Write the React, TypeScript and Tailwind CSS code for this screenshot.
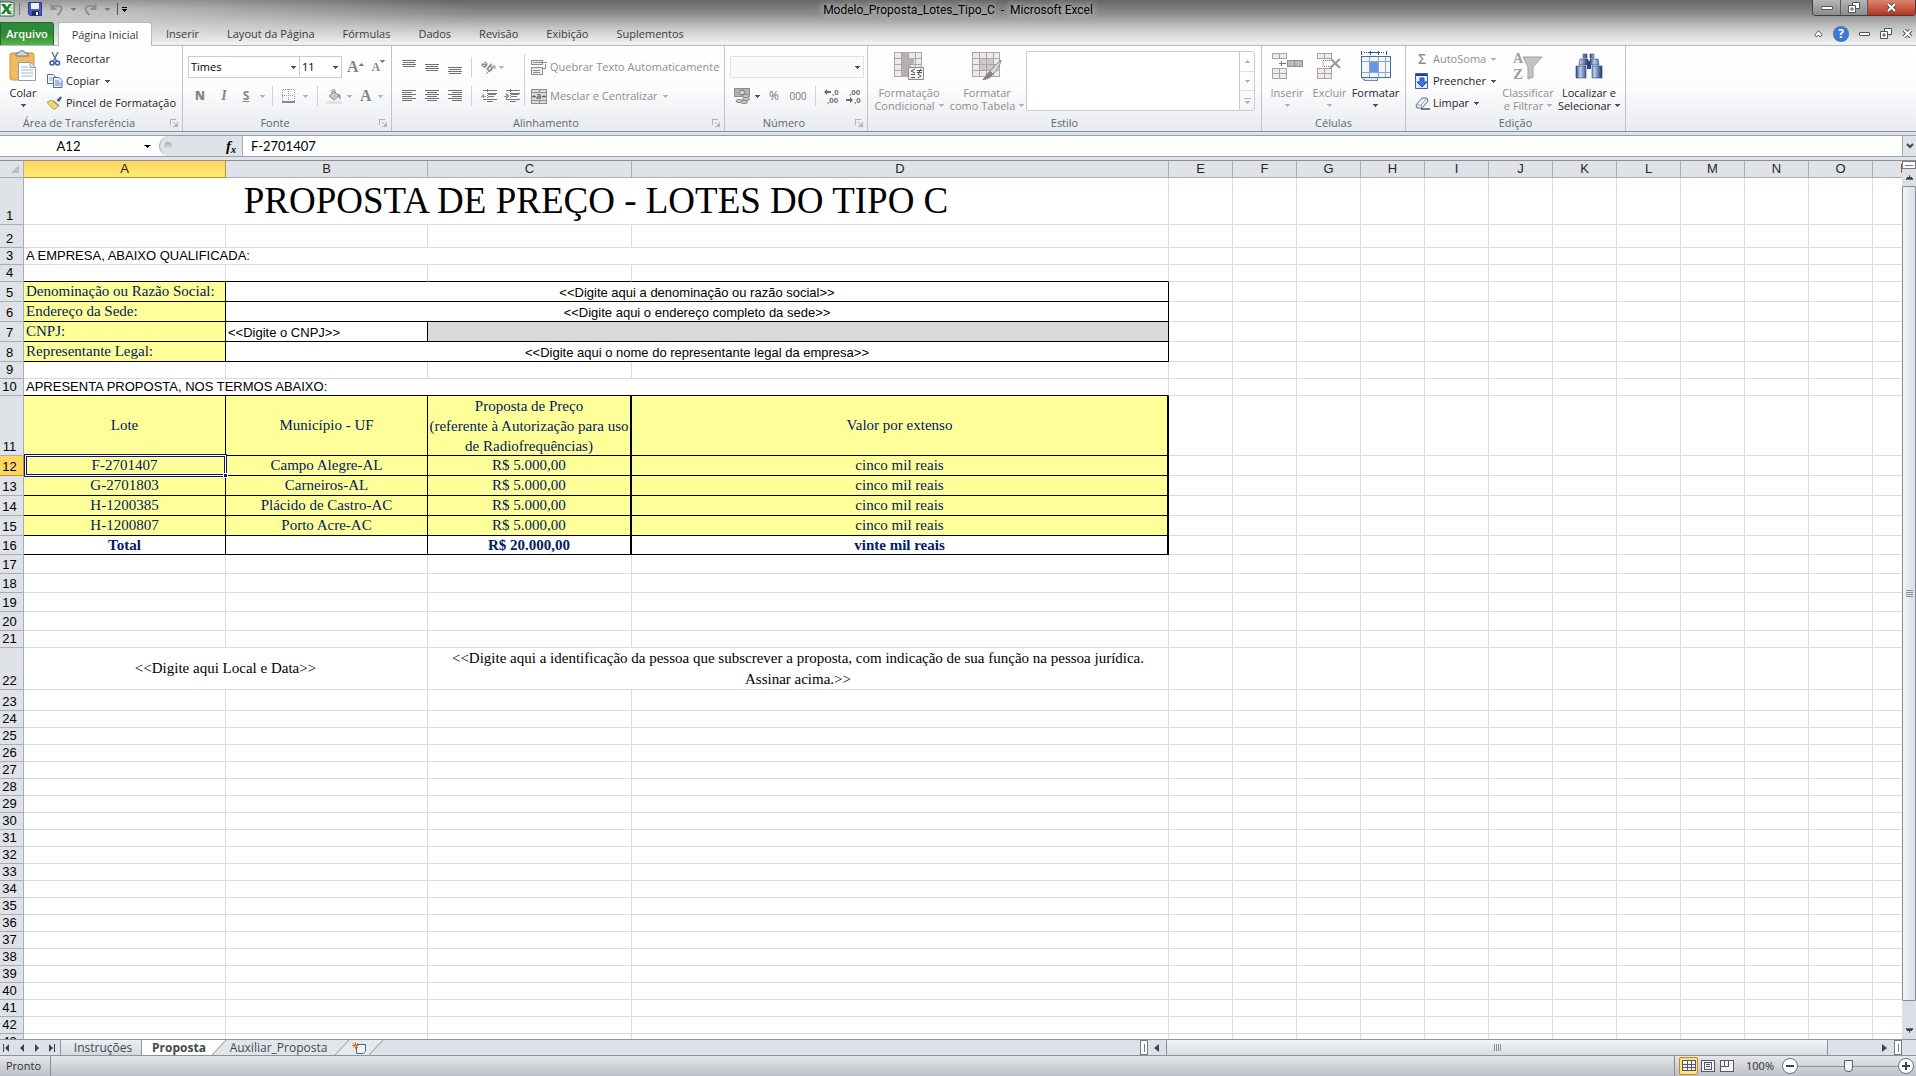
import type { ReactNode } from 'react';
import clsx from 'clsx';

const LINE = 'border-r border-b border-r-[#dadcdd] border-b-[#dadcdd]';
const BOX = 'border-r border-b border-r-black border-b-black';
const SERIF = 'font-["Liberation_Serif",serif] text-[15px] leading-[19px]';
const SERIF_BOLD = 'font-["Liberation_Serif",serif] text-[15px] leading-[18px] font-bold';
const NAVY = 'text-[#002060]';
const YELLOW = 'bg-[#ffff99]';

const EXTRA_COLUMNS = ['E', 'F', 'G', 'H', 'I', 'J', 'K', 'L', 'M', 'N', 'O', 'P'];
const RIBBON_TABS = ['Inserir', 'Layout da Página', 'Fórmulas', 'Dados', 'Revisão', 'Exibição', 'Suplementos'];

const COMPANY = [
  { n: 5, label: 'Denominação ou Razão Social:', value: '<<Digite aqui a denominação ou razão social>>' },
  { n: 6, label: 'Endereço da Sede:', value: '<<Digite aqui o endereço completo da sede>>' },
  { n: 7, label: 'CNPJ:', value: '<<Digite o CNPJ>>' },
  { n: 8, label: 'Representante Legal:', value: '<<Digite aqui o nome do representante legal da empresa>>' },
];

const LOTS = [
  { n: 12, lot: 'F-2701407', city: 'Campo Alegre-AL' },
  { n: 13, lot: 'G-2701803', city: 'Carneiros-AL' },
  { n: 14, lot: 'H-1200385', city: 'Plácido de Castro-AC' },
  { n: 15, lot: 'H-1200807', city: 'Porto Acre-AC' },
];

/* ---------- small pieces ---------- */

function Arrow({ className = 'text-[#505050]' }: { className?: string }) {
  return (
    <svg width="5" height="3" viewBox="0 0 5 3" className={clsx('shrink-0', className)} shapeRendering="crispEdges">
      <path d="M0 0h5v1h-1v1h-1v1h-1v-1h-1v-1h-1z" fill="currentColor" />
    </svg>
  );
}

function Sep() {
  return <span className="h-5 w-px shrink-0 bg-[#cdd1d8]" />;
}

function Launcher({ label }: { label: string }) {
  return (
    <button aria-label={label} className="flex w-5 justify-end">
      <svg width="8" height="8" viewBox="0 0 8 8" fill="none" stroke="#b0b4ba" shapeRendering="crispEdges">
        <path d="M.5 6V.5H6M3 3l3 3M7.5 3v4.5H3" />
        <path d="M5 5h2v2H5z" fill="#b0b4ba" stroke="none" />
      </svg>
    </button>
  );
}

function Group({ title, width, launcher = false, children }: { title: string; width: string; launcher?: boolean; children: ReactNode }) {
  return (
    <section aria-label={title} className={clsx('flex shrink-0 flex-col border-r border-[#bfc3c9]', width)}>
      <div className="flex h-[69px]">{children}</div>
      <div className={clsx('flex h-4 items-center', launcher && 'pr-1')}>
        <span className="flex-1 text-center text-[#5f6572]">{title}</span>
        {launcher && <Launcher label={`Opções de ${title}`} />}
      </div>
    </section>
  );
}

function SmallButton({ icon, label, arrow = false, disabled = false }: { icon: ReactNode; label: string; arrow?: boolean; disabled?: boolean }) {
  return (
    <button className={clsx('flex h-[22px] items-center gap-[3px] whitespace-nowrap', disabled ? 'text-[#8e8e8e]' : 'text-[#262626]')}>
      <span className="flex w-4 justify-center">{icon}</span>
      <span>{label}</span>
      {arrow && <Arrow className={clsx('ml-[2px]', disabled ? 'text-[#b4b4b4]' : 'text-[#505050]')} />}
    </button>
  );
}

function BigButton({ icon, lines, width, disabled = false }: { icon: ReactNode; lines: string[]; width: string; disabled?: boolean }) {
  const arrow = <Arrow className={disabled ? 'text-[#b4b4b4]' : 'text-[#505050]'} />;
  return (
    <button className={clsx('flex shrink-0 flex-col items-center pt-1 leading-[13px] whitespace-nowrap', width, disabled ? 'text-[#8e8e8e]' : 'text-[#262626]')}>
      <span className="mb-1 flex h-8 items-center">{icon}</span>
      <span>{lines[0]}</span>
      <span className="flex h-[13px] items-center gap-1">{lines[1]}{arrow}</span>
    </button>
  );
}

/* ---------- icons ---------- */

const ExcelLogo = () => (
  <svg width="15" height="16" viewBox="0 0 15 16">
    <path d="M0 1h9l5 1v13H0z" fill="#fff" stroke="#1e7a34" />
    <path d="M10 3h3v2h-3zM10 6h3v2h-3zM10 9h3v2h-3zM10 12h3v2h-3z" fill="#b6dcae" />
    <path d="M1 3h4l2 3 2-3h3L8.500 8 12 13H8L6 10l-2 3H1l3.500-5z" fill="#1f8238" />
  </svg>
);

const SaveIcon = () => (
  <svg width="14" height="14" viewBox="0 0 14 14">
    <path d="M.5.5h13v13H2L.5 12z" fill="#4a56b8" stroke="#2f3a93" />
    <path d="M3 1h8v6H3z" fill="#eef2fb" />
    <path d="M4 9h7v4H4z" fill="#1f2766" />
    <path d="M8 10h2v3H8z" fill="#fff" />
  </svg>
);

const UndoIcon = ({ flip = false }: { flip?: boolean }) => (
  <svg width="13" height="13" viewBox="0 0 13 13" className={clsx(flip && '-scale-x-100')}>
    <path d="M1.500 1v5h5M2 5.500C4 2 11 1.500 11.500 6c0 3-2 4-4 6" fill="none" stroke="#8f8f8f" strokeWidth="2" />
  </svg>
);

const PasteIcon = () => (
  <svg width="28" height="32" viewBox="0 0 28 32">
    <rect x="1" y="3" width="24" height="27" rx="2" fill="#eebb62" stroke="#cf9639" />
    <path d="M7 6V3h3c0-3 6-3 6 0h3v3z" fill="#d5d8dc" stroke="#6f757d" />
    <path d="M9.500 12.500H21l5.500 5v13h-17z" fill="#fff" stroke="#8b9cb5" />
    <path d="M21 12.500v5h5.500" fill="#dfe8f4" stroke="#8b9cb5" />
    <path d="M12 17h7M12 20h12M12 23h12M12 26h12" stroke="#9fb2cf" />
  </svg>
);

const CutIcon = () => (
  <svg width="12" height="15" viewBox="0 0 12 15" fill="none">
    <path d="M3 0l4.500 9M9 0L4.500 9" stroke="#6b7788" strokeWidth="1.500" />
    <circle cx="3" cy="11" r="2" stroke="#2f5fb0" strokeWidth="1.600" />
    <circle cx="8.500" cy="11" r="2" stroke="#2f5fb0" strokeWidth="1.600" />
  </svg>
);

const CopyIcon = () => (
  <svg width="16" height="14" viewBox="0 0 16 14" stroke="#4b6da5">
    <path d="M.5.5H6l2.500 2.500v6.500h-8z" fill="#f7faff" />
    <path d="M2 4h4M2 6h4" stroke="#86a5d8" />
    <path d="M6.500 3.500H12l3 3v7H6.500z" fill="#eaf1fc" />
    <path d="M8 7h4M8 9h6M8 11h6" stroke="#5b86cf" />
  </svg>
);

const BrushIcon = () => (
  <svg width="17" height="14" viewBox="0 0 17 14">
    <path d="M10 4l4-4 2 1-3 5z" fill="#4f5a80" />
    <path d="M7 4l6 5-1 2-7-6z" fill="#8d97ad" />
    <path d="M5 4l7 6-4 4C5 12 2 9 0 6z" fill="#f1d97a" stroke="#b79336" />
  </svg>
);

function AlignIcon({ rows, className }: { rows: string; className?: string }) {
  return (
    <svg width="14" height="12" viewBox="0 0 14 12" className={className} stroke="#707070" shapeRendering="crispEdges">
      <path d={rows} />
    </svg>
  );
}

const IndentIcon = ({ right = false }: { right?: boolean }) => (
  <svg width="16" height="14" viewBox="0 0 16 14" stroke="#7a7a7a" shapeRendering="crispEdges">
    <path d="M2 1.500h14M7 4.500h9M7 7.500h6M2 10.500h14M6 12.500h6" />
    <path d="M7 5h8v1H7z" fill="#7a7a7a" stroke="none" />
    <path d={right ? 'M5 7L2 4v6z' : 'M0 7l3-3v6z'} fill="#9a9a9a" stroke="none" />
    <path d="M0 7.500h5" stroke="#9a9a9a" />
    <path d="M6.500 0v14" strokeDasharray="1 1" />
  </svg>
);

const OrientIcon = () => (
  <svg width="16" height="15" viewBox="0 0 16 15" className="overflow-visible">
    <text x="0" y="8" fontSize="10" fontWeight="bold" fill="#858585" transform="rotate(38 4 6)">ab</text>
    <path d="M5 14L14 6M14 6h-3M14 6v3" stroke="#8d8d8d" fill="none" />
  </svg>
);

const WrapIcon = () => (
  <svg width="16" height="15" viewBox="0 0 16 15" fill="none" stroke="#8d8d8d" shapeRendering="crispEdges">
    <path d="M.5.500h11v4H.5zM.5 7.500h11v7H.5z" fill="#eeeaee" />
    <path d="M2 2.500h14M2 10.500h7M2 12.500h7M14.500 4v5M12 8.500h3" />
  </svg>
);

const MergeIcon = () => (
  <svg width="16" height="15" viewBox="0 0 16 15" stroke="#8d8d8d">
    <path d="M.5.500h15v14H.5zM.5 3.500h15M.5 11.500h15M8 .5v3M8 11.500v3" fill="#ddd9dd" shapeRendering="crispEdges" />
    <path d="M1 7.500h4M11 7.500h4M3 6v3M13 6v3" stroke="#666" />
    <text x="5" y="10" fontSize="9" fontWeight="bold" fill="#666" stroke="none">a</text>
  </svg>
);

const BorderIcon = () => (
  <svg width="13" height="14" viewBox="0 0 13 14" fill="none" stroke="#9a9a9a" shapeRendering="crispEdges">
    <path d="M.5.500h12v12M.5.500v12M6.500 0v12M0 6.500h12" strokeDasharray="1 1" />
    <path d="M0 12.500h13" strokeWidth="2" stroke="#8a8a8a" />
  </svg>
);

const BucketIcon = () => (
  <svg width="16" height="15" viewBox="0 0 16 15">
    <path d="M0 12h16v3H0z" fill="#e6dfe3" />
    <path d="M3 7l5-5 5 5-5 4z" fill="#c8c8c8" stroke="#8d8d8d" />
    <path d="M6 5V1c0-1 3-1 3 0v4" fill="none" stroke="#8d8d8d" />
    <path d="M12 5c3 0 3 2 2 6-1-1-1-4-2-6z" fill="#8d8d8d" />
  </svg>
);

const MoneyIcon = () => (
  <svg width="17" height="16" viewBox="0 0 17 16">
    <rect x=".5" y=".5" width="15" height="8" fill="#b4b0b2" stroke="#8a8a8a" />
    <circle cx="8" cy="4.500" r="2.500" fill="#d8d5d7" stroke="#777" />
    <g fill="#cfcccd" stroke="#858585">
      <ellipse cx="12" cy="8" rx="3.500" ry="1.500" />
      <ellipse cx="12" cy="11" rx="3.500" ry="1.500" />
      <ellipse cx="10" cy="14" rx="3.500" ry="1.500" />
      <ellipse cx="5" cy="13" rx="3" ry="1.500" />
    </g>
  </svg>
);

const DecimalIcon = ({ top, bottom }: { top: string; bottom: string }) => (
  <svg width="17" height="16" viewBox="0 0 17 16" fill="#6a6a6a" fontSize="8" fontWeight="600" fontFamily="Liberation Sans, sans-serif" className="overflow-visible">
    <text x={top === ',0' ? 8 : 3} y="7">{top}</text>
    <text x={bottom === ',0' ? 8 : 3} y="15">{bottom}</text>
    {top === ',0' ? <path d="M0 4l3-3v2h4v2H3v2z" /> : <path d="M7 12l-3-3v2H0v2h4v2z" />}
  </svg>
);

const GridBase = () => (
  <path d="M.5.500h27v24H.5zM.5 6.500h27M.5 12.500h27M.5 18.500h27M7.500.500v24M14.500.500v24M21.500.500v24" fill="#efe9ef" stroke="#aaa6aa" shapeRendering="crispEdges" />
);

const CondIcon = () => (
  <svg width="30" height="28" viewBox="0 0 30 28">
    <GridBase />
    <path d="M8 0h6v25H8zM14 7h6v5h-6zM14 13h3v5h-3z" fill="#b3b0b3" />
    <path d="M14.500 15.500h15v12h-15z" fill="#f4f2f4" stroke="#8a8a8a" />
    <path d="M21 17l-4 2 4 2M17 22.500h4M17 25.500h4M23 18.500h5M23 20.500h5M27 17l-3 5M24 22l3 2-3 2" fill="none" stroke="#555" />
  </svg>
);

const TableFmtIcon = () => (
  <svg width="30" height="29" viewBox="0 0 30 29">
    <GridBase />
    <path d="M8 7h6v5H8zM15 7h6v5h-6zM8 13h6v5H8zM15 13h6v5h-6z" fill="#cbc8cb" />
    <path d="M29 8c-1 6-4 10-8 14l-3-3c4-4 7-8 11-11z" fill="#d9d9d9" stroke="#858585" />
    <path d="M18 19l3 3c-2 4-6 6-11 6 3-2 4-7 8-9z" fill="#858585" />
  </svg>
);

const InsertIcon = () => (
  <svg width="31" height="27" viewBox="0 0 31 27" stroke="#a8a4a8" fill="#f0eaf0" shapeRendering="crispEdges">
    <path d="M.5.500h14v5H.5zM7.500.500v5M.5 15.500h14v10H.5zM7.500 15.500v10M.5 20.500h14" />
    <path d="M15.500 7.500h15v6h-15zM22.500 7.500v6" fill="#bdb9bd" stroke="#8f8f8f" />
    <path d="M7 10.500h7M9 8v5" stroke="#777" />
  </svg>
);

const DeleteIcon = () => (
  <svg width="25" height="27" viewBox="0 0 25 27" stroke="#a8a4a8" fill="#f0eaf0">
    <path d="M.5.500h14v5H.5zM7.500.500v5M.5 15.500h14v10H.5zM7.500 15.500v10M.5 20.500h14" shapeRendering="crispEdges" />
    <path d="M15 7.500H6v6h9" fill="none" strokeDasharray="1 1" stroke="#777" />
    <path d="M14 6l9 9M23 6l-10 9" stroke="#999" strokeWidth="2" />
  </svg>
);

const FormatIcon = () => (
  <svg width="30" height="31" viewBox="0 0 30 31" shapeRendering="crispEdges">
    <path d="M.5 0v4M25.500 0v4" stroke="#34508c" />
    <path d="M3 1.500h5M18 1.500h6" stroke="#34508c" strokeDasharray="1 1" />
    <path d="M8 1.500h10M9.500 0v4M17.500 0v4" stroke="#34508c" />
    <path d="M.5 5.500h29v21H.5z" fill="#f3f7fd" stroke="#4d6a9c" />
    <path d="M1 10.500h28M1 21.500h28M8.500 6v20M17.500 6v20M24.500 6v20" stroke="#8ea6cf" />
    <path d="M9 11h8v10H9z" fill="#6b93e6" />
    <path d="M1 27l3 2.500h12l1-3" fill="#dfe8f6" stroke="#6f89b8" />
  </svg>
);

const FillIcon = () => (
  <svg width="14" height="16" viewBox="0 0 14 16">
    <path d="M.5.500h12v15H.5z" fill="#e2ebfa" stroke="#3b5f9f" />
    <path d="M1 1h11v2H1z" fill="#1f448c" />
    <path d="M5 5h4v4h3l-5 5-5-5h3z" fill="#3c78e0" stroke="#1d4fae" />
  </svg>
);

const EraserIcon = () => (
  <svg width="15" height="13" viewBox="0 0 15 13">
    <path d="M1 8l6-7h5l1 3-6 7H2z" fill="#f0f4fb" stroke="#5c6c8c" />
    <path d="M1 8h5l6-7M6 8l1 3" fill="none" stroke="#8d9cba" />
    <path d="M6 12h9" stroke="#000" />
  </svg>
);

const SortIcon = () => (
  <svg width="30" height="30" viewBox="0 0 30 30" fill="#9c9c9c" fontWeight="bold" fontFamily="Liberation Serif, serif" className="overflow-visible">
    <path d="M10 6h19l-9 10v10l-5 2V16z" fill="#c4c4c4" stroke="#a0a0a0" />
    <text x="0" y="12" fontSize="14">A</text>
    <text x="0" y="28" fontSize="15">Z</text>
  </svg>
);

const BinocularsIcon = () => (
  <svg width="28" height="26" viewBox="0 0 28 26">
    <defs>
      <linearGradient id="barrel">
        <stop offset="0" stopColor="#2d4778" />
        <stop offset=".35" stopColor="#b9d0f4" />
        <stop offset="1" stopColor="#1f3766" />
      </linearGradient>
    </defs>
    <path d="M12 8h4v8h-4z" fill="#2d4778" />
    <g fill="url(#barrel)" stroke="#2c4675" strokeWidth=".6">
      <path d="M8 1h4v4H8zM5 6h8v6H4zM1 13h10v12H1z" />
      <path d="M15 1h4v4h-4zM15 6h8l1 6h-9zM17 13h10v12H17z" />
    </g>
  </svg>
);

const RestoreIcon = ({ className }: { className?: string }) => (
  <svg width="12" height="11" viewBox="0 0 12 11" fill="#fff" stroke="#4f545c" className={className}>
    <path d="M4.500.500h7v6h-7z" />
    <path d="M.5 3.500h7v7h-7zM3 6h2v2H3z" />
  </svg>
);

const CrossIcon = () => (
  <svg width="11" height="9" viewBox="0 0 11 9">
    <path d="M2 1l7 7M9 1L2 8" stroke="#4f545c" strokeWidth="4" />
    <path d="M2 1l7 7M9 1L2 8" stroke="#fff" strokeWidth="2" />
  </svg>
);

/* ---------- window chrome ---------- */

function TitleBar() {
  return (
    <header className="grid h-[22px] grid-cols-[1fr_auto_1fr] items-start">
      <div className="flex h-[18px] items-center gap-2">
        <ExcelLogo />
        <span className="-ml-1 h-3 w-px bg-[#777]" />
        <button aria-label="Salvar"><SaveIcon /></button>
        <button aria-label="Desfazer" className="flex items-center gap-2"><UndoIcon /><Arrow className="text-[#777]" /></button>
        <button aria-label="Refazer" className="flex items-center gap-2"><UndoIcon flip /><Arrow className="text-[#777]" /></button>
        <span className="-ml-px h-3 w-px bg-[#555]" />
        <button aria-label="Personalizar" className="-ml-1 flex flex-col items-center gap-px text-black">
          <span className="h-px w-[5px] bg-black" />
          <Arrow className="text-black" />
        </button>
      </div>
      <h1 className="font-['Roboto',sans-serif] text-[12px] leading-5 whitespace-pre text-black [text-shadow:0_0_6px_#ddd,0_0_10px_#ccc]">
        Modelo_Proposta_Lotes_Tipo_C  -  Microsoft Excel
      </h1>
      <div className="flex h-4 justify-end">
        <div className="flex overflow-hidden rounded-b-[4px] border border-t-0 border-[#3e3e3e]">
          <button aria-label="Minimizar" className="flex w-7 items-center justify-center border-r border-[#5c5c5c] bg-linear-to-b from-[#b5b5b5] to-[#8c8c8c]">
            <span className="h-1 w-3 rounded-[1px] border border-[#555] bg-white" />
          </button>
          <button aria-label="Restaurar" className="flex w-[27px] items-center justify-center border-r border-[#5c5c5c] bg-linear-to-b from-[#b5b5b5] to-[#8c8c8c]">
            <RestoreIcon />
          </button>
          <button aria-label="Fechar" className="flex w-[47px] items-center justify-center bg-linear-to-b from-[#d9836f] to-[#b8301a]">
            <CrossIcon />
          </button>
        </div>
      </div>
    </header>
  );
}

function RibbonTabs() {
  return (
    <nav className="flex h-6 items-stretch border-b border-[#b6babf] text-[#3c3c3c]">
      <button className="mr-1 w-[54px] rounded-tr-[3px] border border-b-0 border-[#1c6b2c] bg-linear-to-b from-[#2c8a3a] via-[#2d8a35] to-[#55b34a] text-white">
        <strong className="font-semibold">Arquivo</strong>
      </button>
      <button className="-mb-px w-[94px] rounded-t-[3px] border border-b-0 border-[#b6babf] bg-white">Página Inicial</button>
      <div className="flex flex-1">
        {RIBBON_TABS.map((tab) => (
          <button key={tab} className="px-[14px] whitespace-nowrap">{tab}</button>
        ))}
      </div>
      <div className="flex items-center gap-[10px] pr-[3px]">
        <button aria-label="Minimizar faixa de opções">
          <svg width="9" height="8" viewBox="0 0 9 8" fill="#fff" stroke="#4f545c"><path d="M4.500.700L8 4.500 6.500 7l-2-2-2 2L1 4.500z" /></svg>
        </button>
        <button aria-label="Ajuda" className="h-4 w-4 rounded-full bg-[#3f78cf] text-[12px] leading-4 font-bold text-white">?</button>
        <button aria-label="Minimizar janela" className="h-1 w-[11px] rounded-[1px] border border-[#4f545c] bg-white" />
        <button aria-label="Restaurar janela"><RestoreIcon /></button>
        <button aria-label="Fechar janela"><CrossIcon /></button>
      </div>
    </nav>
  );
}

function Ribbon() {
  return (
    <div className="flex h-[86px] shrink-0 overflow-hidden border-b border-[#8b9097] bg-linear-to-b from-white via-[#fcfcfd] to-[#e8ebef]">
      <Group title="Área de Transferência" width="w-[183px]" launcher>
        <BigButton icon={<PasteIcon />} lines={['Colar']} width="w-[46px]" />
        <div className="flex flex-col items-start pt-[2px] pl-px">
          <SmallButton icon={<CutIcon />} label="Recortar" />
          <SmallButton icon={<CopyIcon />} label="Copiar" arrow />
          <SmallButton icon={<BrushIcon />} label="Pincel de Formatação" />
        </div>
      </Group>

      <Group title="Fonte" width="w-[209px]" launcher>
        <div className="flex flex-col gap-2 pt-[10px] pl-[5px]">
          <div className="flex h-[22px] items-center">
            <div className="relative flex items-center">
              <select aria-label="Fonte" className="h-[22px] w-28 appearance-none border border-[#c9ccd2] bg-white px-[2px] text-black">
                <option>Times</option>
              </select>
              <Arrow className="pointer-events-none absolute right-1 text-[#505050]" />
            </div>
            <div className="relative flex items-center">
              <select aria-label="Tamanho da fonte" className="-ml-px h-[22px] w-[43px] appearance-none border border-[#c9ccd2] bg-white px-[2px] text-black">
                <option>11</option>
              </select>
              <Arrow className="pointer-events-none absolute right-1 text-[#505050]" />
            </div>
            <button aria-label="Aumentar fonte" className="ml-[5px] flex font-['Liberation_Serif',serif] text-[16px] font-bold text-[#858585]">
              A<Arrow className="mt-1 rotate-180" />
            </button>
            <button aria-label="Diminuir fonte" className="ml-2 flex items-end font-['Liberation_Serif',serif] text-[12px] font-bold text-[#858585]">
              A<Arrow className="mb-3" />
            </button>
          </div>
          <div className="flex h-5 items-center text-[#858585]">
            <button aria-label="Negrito" className="ml-1 w-4 text-[12px] font-extrabold">N</button>
            <button aria-label="Itálico" className="ml-2 w-4 font-['Liberation_Serif',serif] text-[14px] font-bold italic">I</button>
            <button aria-label="Sublinhado" className="ml-2 w-3 text-[12px] font-bold underline">S</button>
            <Arrow className="mr-[7px] ml-2 text-[#b4b4b4]" />
            <Sep />
            <button aria-label="Bordas" className="mx-[9px] flex items-center gap-2"><BorderIcon /><Arrow className="text-[#b4b4b4]" /></button>
            <Sep />
            <button aria-label="Cor de preenchimento" className="ml-2 flex items-center gap-[5px]"><BucketIcon /><Arrow className="text-[#b4b4b4]" /></button>
            <button aria-label="Cor da fonte" className="ml-2 flex items-center gap-[6px] font-['Liberation_Serif',serif] text-[16px] font-bold">
              A<Arrow className="text-[#b4b4b4]" />
            </button>
          </div>
        </div>
      </Group>

      <Group title="Alinhamento" width="w-[333px]" launcher>
        <div className="flex flex-col gap-[9px] pt-[11px] pl-[10px]">
          <div className="flex h-5 items-center gap-[9px]">
            <button aria-label="Alinhar em cima"><AlignIcon className="-mt-2" rows="M0 3.500h14M1 5.500h12M0 7.500h14M1 9.500h12" /></button>
            <button aria-label="Alinhar no meio"><AlignIcon rows="M0 3.500h14M1 5.500h12M0 7.500h14M1 9.500h12" /></button>
            <button aria-label="Alinhar embaixo"><AlignIcon className="mt-2" rows="M0 2.500h14M1 4.500h12M0 6.500h14M1 8.500h12" /></button>
            <Sep />
            <button aria-label="Orientação" className="flex items-center gap-[2px]"><OrientIcon /><Arrow className="text-[#b4b4b4]" /></button>
          </div>
          <div className="flex h-5 items-center gap-[9px]">
            <button aria-label="Alinhar à esquerda"><AlignIcon rows="M0 .5h14M0 2.500h10M0 4.500h14M0 6.500h10M0 8.500h14M0 10.500h10" /></button>
            <button aria-label="Centralizar"><AlignIcon rows="M0 .5h14M2 2.500h10M0 4.500h14M2 6.500h10M0 8.500h14M2 10.500h10" /></button>
            <button aria-label="Alinhar à direita"><AlignIcon rows="M0 .5h14M4 2.500h10M0 4.500h14M4 6.500h10M0 8.500h14M4 10.500h10" /></button>
            <Sep />
            <button aria-label="Diminuir recuo"><IndentIcon /></button>
            <button aria-label="Aumentar recuo" className="-ml-[2px]"><IndentIcon right /></button>
          </div>
        </div>
        <div className="mt-2 ml-1 h-[52px] w-px bg-[#cdd1d8]" />
        <div className="flex flex-col gap-[7px] pt-[10px] pl-[6px]">
          <SmallButton icon={<WrapIcon />} label="Quebrar Texto Automaticamente" disabled />
          <SmallButton icon={<MergeIcon />} label="Mesclar e Centralizar" arrow disabled />
        </div>
      </Group>

      <Group title="Número" width="w-[143px]" launcher>
        <div className="flex flex-col gap-2 pt-[10px] pl-[5px]">
          <div className="relative flex items-center">
            <select aria-label="Formato de número" className="h-[22px] w-[134px] appearance-none border border-[#dfe1e5] bg-[#fafafb]" />
            <Arrow className="pointer-events-none absolute right-1 text-[#505050]" />
          </div>
          <div className="flex h-5 items-center text-[#757575]">
            <button aria-label="Formato de contabilização" className="ml-1 flex items-center gap-1"><MoneyIcon /><Arrow /></button>
            <button aria-label="Porcentagem" className="ml-2 w-3 text-[12px]">%</button>
            <button aria-label="Separador de milhares" className="mr-2 ml-[9px] w-[18px] text-[10px]">000</button>
            <Sep />
            <button aria-label="Aumentar casas decimais" className="ml-2"><DecimalIcon top=",0" bottom=",00" /></button>
            <button aria-label="Diminuir casas decimais" className="ml-[5px]"><DecimalIcon top=",00" bottom=",0" /></button>
          </div>
        </div>
      </Group>

      <Group title="Estilo" width="w-[394px]">
        <div className="flex pl-[2px]">
          <BigButton icon={<CondIcon />} lines={['Formatação', 'Condicional']} width="w-[78px]" disabled />
          <BigButton icon={<TableFmtIcon />} lines={['Formatar', 'como Tabela']} width="w-[78px]" disabled />
        </div>
        <div className="mt-[5px] flex h-[60px] w-[229px] rounded-r-[3px] border border-[#c9ccd2]">
          <div className="flex-1 border-r border-[#c9ccd2] bg-white" />
          <div className="flex w-[14px] flex-col divide-y divide-[#dfe1e5]">
            <button aria-label="Acima" className="flex flex-1 items-center justify-center"><Arrow className="rotate-180 text-[#b4b4b4]" /></button>
            <button aria-label="Abaixo" className="flex flex-1 items-center justify-center"><Arrow className="text-[#b4b4b4]" /></button>
            <button aria-label="Mais estilos" className="flex flex-1 flex-col items-center justify-center gap-[2px]">
              <span className="h-px w-[7px] bg-[#b4b4b4]" />
              <Arrow className="text-[#b4b4b4]" />
            </button>
          </div>
        </div>
      </Group>

      <Group title="Células" width="w-36">
        <div className="flex pl-1">
          <BigButton icon={<InsertIcon />} lines={['Inserir']} width="w-[42px]" disabled />
          <BigButton icon={<DeleteIcon />} lines={['Excluir']} width="w-[43px]" disabled />
          <BigButton icon={<FormatIcon />} lines={['Formatar']} width="w-[49px]" />
        </div>
      </Group>

      <Group title="Edição" width="w-[220px]">
        <div className="flex w-[92px] flex-col items-start pt-[2px] pl-2">
          <SmallButton icon={<span className="text-[14px] font-semibold">Σ</span>} label="AutoSoma" arrow disabled />
          <SmallButton icon={<FillIcon />} label="Preencher" arrow />
          <SmallButton icon={<EraserIcon />} label="Limpar" arrow />
        </div>
        <BigButton icon={<SortIcon />} lines={['Classificar', 'e Filtrar']} width="w-[60px]" disabled />
        <BigButton icon={<BinocularsIcon />} lines={['Localizar e', 'Selecionar']} width="w-[62px]" />
      </Group>
    </div>
  );
}

function FormulaBar() {
  return (
    <div className="shrink-0 border-b border-[#8a8f8f] bg-[#dde4ec] py-[3px]">
      <div className="flex h-[22px] items-stretch border-y border-[#9aa0a8] bg-white font-['Lato',sans-serif] text-[13px] text-black">
        <input aria-label="Caixa de nome" defaultValue="A12" className="w-[137px] bg-transparent text-center outline-none" />
        <button aria-label="Abrir lista de nomes" className="flex w-[22px] items-center pl-2"><Arrow className="scale-125 text-black" /></button>
        <div className="flex w-[84px] items-center justify-between rounded-l-[10px] border-r border-l border-[#a6abb2] bg-[#dfe3e8] pr-[6px] pl-1">
          <span className="h-2 w-2 rounded-full bg-linear-to-b from-[#a8adb3] to-[#eceef0]" />
          <button aria-label="Inserir função" className="font-['Liberation_Serif',serif] text-[15px] leading-none font-bold italic">
            f<sub className="text-[10px]">x</sub>
          </button>
        </div>
        <input aria-label="Barra de fórmulas" defaultValue="F-2701407" className="min-w-0 flex-1 px-2 outline-none" />
        <button aria-label="Expandir barra de fórmulas" className="flex w-[14px] items-center justify-center border-l border-[#a6abb2] bg-[#dfe3e8]">
          <svg width="8" height="6" viewBox="0 0 8 6" fill="none" stroke="#444" strokeWidth="2"><path d="M1 1l3 3 3-3" /></svg>
        </button>
      </div>
    </div>
  );
}

/* ---------- sheet ---------- */

function Row({ n, height, active = false, children }: { n: number; height: string; active?: boolean; children?: ReactNode }) {
  return (
    <tr className={height}>
      <th
        scope="row"
        className={clsx(
          'border-r border-b pr-1 text-center align-bottom leading-4 font-normal',
          active ? 'border-[#c98f1f] bg-[#ffd75e]' : 'border-[#a9aeb4] bg-[#dfe3e8]',
        )}
      >
        {n}
      </th>
      {children ?? ['A', 'B', 'C', 'D'].map((c) => <td key={c} className={LINE} />)}
      {EXTRA_COLUMNS.map((c) => <td key={c} className={LINE} />)}
    </tr>
  );
}

// Navy, white, navy frame drawn over the edges of the active cell
function Selection() {
  return (
    <span className="absolute -top-[2px] -right-[2px] -bottom-[2px] left-0 z-10 border border-[#10107a]">
      <span className="absolute inset-0 border border-white">
        <span className="absolute inset-0 border border-[#10107a]" />
      </span>
      <span className="absolute -right-[2px] -bottom-[2px] h-[5px] w-[5px] border border-white bg-[#10107a]" />
    </span>
  );
}

function Sheet() {
  const priceCell = `${BOX} ${SERIF} ${NAVY} text-center align-middle`;
  const totalCell = `${BOX} ${SERIF_BOLD} ${NAVY} text-center align-middle`;
  const thick = 'border-r-2';

  return (
    <table className="w-[1937px] table-fixed border-separate border-spacing-0 font-['Liberation_Sans',Arial,sans-serif] text-[13px] leading-4 text-black">
      <colgroup>
        <col className="w-6" />
        <col className="w-[202px]" />
        <col className="w-[202px]" />
        <col className="w-[204px]" />
        <col className="w-[537px]" />
        {EXTRA_COLUMNS.map((c) => <col key={c} className="w-16" />)}
      </colgroup>
      <thead>
        <tr className="h-[17px] text-[#262626]">
          <th aria-label="Selecionar tudo" className="border-r border-b border-[#a9aeb4] bg-[#dfe3e8]">
            <svg width="8" height="8" viewBox="0 0 8 8" className="mr-1 ml-auto"><path d="M8 0v8H0z" fill="#b9bec5" /></svg>
          </th>
          <th scope="col" className="border-r border-b border-[#c98f1f] bg-linear-to-b from-[#fed45c] to-[#ffeb74] font-normal">A</th>
          {['B', 'C', 'D', ...EXTRA_COLUMNS].map((c) => (
            <th key={c} scope="col" className="border-r border-b border-[#a9aeb4] bg-[#dfe3e8] font-normal">{c}</th>
          ))}
        </tr>
      </thead>
      <tbody>
        <Row n={1} height="h-[47px]">
          <td colSpan={4} className={`${LINE} text-center align-middle font-["Liberation_Serif",serif] text-[37px] leading-[46px]`}>
            PROPOSTA DE PREÇO - LOTES DO TIPO C
          </td>
        </Row>
        <Row n={2} height="h-[23px]" />
        <Row n={3} height="h-[17px]">
          <td colSpan={4} className={`${LINE} pl-[2px] whitespace-nowrap`}>A EMPRESA, ABAIXO QUALIFICADA:</td>
        </Row>
        <Row n={4} height="h-[17px]">
          {['A', 'B', 'C', 'D'].map((c) => <td key={c} className="border-r border-b border-r-[#dadcdd] border-b-black" />)}
        </Row>

        {COMPANY.map(({ n, label, value }) => (
          <Row key={n} n={n} height="h-5">
            <td className={`${BOX} ${SERIF} ${NAVY} ${YELLOW} pl-[2px] whitespace-nowrap`}>{label}</td>
            {n === 7 ? (
              <>
                <td className={`${BOX} pl-[2px] align-bottom`}>{value}</td>
                <td colSpan={2} className={`${BOX} bg-[#d9d9d9]`} />
              </>
            ) : (
              <td colSpan={3} className={`${BOX} text-center align-bottom`}>{value}</td>
            )}
          </Row>
        ))}

        <Row n={9} height="h-[17px]" />
        <Row n={10} height="h-[17px]">
          <td colSpan={4} className="border-r border-b border-r-[#dadcdd] border-b-black pl-[2px] whitespace-nowrap">
            APRESENTA PROPOSTA, NOS TERMOS ABAIXO:
          </td>
        </Row>

        <Row n={11} height="h-[60px]">
          <td className={`${priceCell} ${YELLOW}`}>Lote</td>
          <td className={`${priceCell} ${YELLOW}`}>Município - UF</td>
          <td className={`${priceCell} ${YELLOW} ${thick}`}>
            <div className="flex h-[59px] flex-col items-center justify-center leading-5 whitespace-nowrap">
              <span>Proposta de Preço</span>
              <span>(referente à Autorização para uso</span>
              <span>de Radiofrequências)</span>
            </div>
          </td>
          <td className={`${priceCell} ${YELLOW} ${thick}`}>Valor por extenso</td>
        </Row>
        {LOTS.map(({ n, lot, city }) => (
          <Row key={n} n={n} height="h-5" active={n === 12}>
            <td className={clsx(priceCell, YELLOW, n === 12 && 'relative')}>
              {lot}
              {n === 12 && <Selection />}
            </td>
            <td className={`${priceCell} ${YELLOW}`}>{city}</td>
            <td className={`${priceCell} ${YELLOW} ${thick}`}>R$ 5.000,00</td>
            <td className={`${priceCell} ${YELLOW} ${thick}`}>cinco mil reais</td>
          </Row>
        ))}
        <Row n={16} height="h-[19px]">
          <td className={totalCell}>Total</td>
          <td className={BOX} />
          <td className={`${totalCell} ${thick}`}>R$ 20.000,00</td>
          <td className={`${totalCell} ${thick}`}>vinte mil reais</td>
        </Row>

        {[17, 18, 19, 20].map((n) => <Row key={n} n={n} height="h-[19px]" />)}
        <Row n={21} height="h-[17px]" />
        <Row n={22} height="h-[42px]">
          <td colSpan={2} className={`${LINE} ${SERIF} text-center align-middle`}>{'<<Digite aqui Local e Data>>'}</td>
          <td colSpan={2} className={`${LINE} ${SERIF} text-center`}>
            <div className="flex h-[41px] flex-col items-center justify-center leading-[21px]">
              <span>{'<<Digite aqui a identificação da pessoa que subscrever a proposta, com indicação de sua função na pessoa jurídica.'}</span>
              <span>{'Assinar acima.>>'}</span>
            </div>
          </td>
        </Row>
        <Row n={23} height="h-[21px]" />
        {Array.from({ length: 20 }, (_, i) => <Row key={i} n={i + 24} height="h-[17px]" />)}
      </tbody>
    </table>
  );
}

function VerticalScroll() {
  return (
    <div className="flex w-[14px] shrink-0 flex-col items-center bg-[#dbdfe5]">
      <div className="flex h-2 w-full items-center justify-center border border-[#777c84] bg-white"><span className="h-px w-2 bg-[#777c84]" /></div>
      <button aria-label="Rolar para cima" className="flex h-[17px] items-center"><Arrow className="scale-150 rotate-180 text-[#444]" /></button>
      <div className="flex w-full flex-1 flex-col items-center justify-center gap-px rounded-[1px] border border-[#858b98] bg-linear-to-r from-[#f3f5f8] to-[#d9dde5]">
        {[0, 1, 2, 3].map((i) => <span key={i} className="h-px w-[7px] bg-[#8a8f99]" />)}
      </div>
      <div className="h-[21px]" />
      <button aria-label="Rolar para baixo" className="flex h-[17px] items-center"><Arrow className="scale-150 text-[#444]" /></button>
    </div>
  );
}

const Slash = ({ left, right }: { left: string; right: string }) => (
  <svg width="14" height="15" viewBox="0 0 14 15" className="shrink-0">
    <path d="M0 0h14L0 15z" fill={left} />
    <path d="M14 0v15H0z" fill={right} />
    <path d="M0 15L14 0" stroke="#8e939b" />
  </svg>
);

const NavIcon = ({ d }: { d: string }) => (
  <svg width="8" height="8" viewBox="0 0 8 8"><path d={d} fill="#3f444b" /></svg>
);

function SheetTabs() {
  const nav = [
    { label: 'Primeira planilha', d: 'M0 0h1v8H0zM6 0v8L2 4z' },
    { label: 'Planilha anterior', d: 'M6 0v8L2 4z' },
    { label: 'Próxima planilha', d: 'M2 0v8l4-4z' },
    { label: 'Última planilha', d: 'M6 0h1v8H6zM1 0v8l4-4z' },
  ];
  return (
    <div className="flex h-[17px] shrink-0 items-stretch border-y border-[#8e939b] bg-[#dde2e9] text-[12px] leading-[15px] text-[#43474e]">
      <div className="flex w-[61px] items-center gap-[7px] border-r border-[#8e939b] pl-[3px]">
        {nav.map(({ label, d }) => <button key={label} aria-label={label}><NavIcon d={d} /></button>)}
      </div>
      <button className="w-[81px] border-r border-[#8e939b] bg-linear-to-b from-[#eceff3] to-[#d5dae0] pl-1">Instruções</button>
      <button className="w-[70px] bg-white pl-1 font-bold">Proposta</button>
      <Slash left="#fff" right="#e2e6eb" />
      <button className="w-[109px] bg-[#e2e6eb] pr-1">Auxiliar_Proposta</button>
      <Slash left="#e2e6eb" right="#e6e9ee" />
      <button aria-label="Inserir planilha" className="flex w-5 items-center justify-center bg-[#e6e9ee]">
        <svg width="15" height="12" viewBox="0 0 15 12">
          <path d="M4.500 2.500h9v7l-2 2h-7z" fill="#eef4fd" stroke="#4b6491" />
          <path d="M3.500 0v7M0 3.500h7M1 1l5 5M6 1L1 6" stroke="#d98a1c" />
        </svg>
      </button>
      <Slash left="#e6e9ee" right="#dde2e9" />
      <div className="flex-1" />
      <div className="flex w-[776px] items-stretch">
        <span className="flex w-2 items-center justify-center border border-[#777c84] bg-white"><span className="h-2 w-px bg-[#777c84]" /></span>
        <button aria-label="Rolar para a esquerda" className="flex w-[18px] items-center justify-center"><NavIcon d="M6 0v8L1 4z" /></button>
        <div className="flex flex-1">
          <div className="flex w-[93%] items-center justify-center gap-px rounded-[1px] border-x border-[#858b98] bg-linear-to-b from-[#f1f4f8] to-[#d9dde5]">
            {[0, 1, 2, 3].map((i) => <span key={i} className="h-[7px] w-px bg-[#8a8f99]" />)}
          </div>
        </div>
        <button aria-label="Rolar para a direita" className="flex w-3 items-center justify-center"><NavIcon d="M2 0v8l5-4z" /></button>
        <span className="ml-1 flex w-2 items-center justify-center border border-[#777c84] bg-white"><span className="h-2 w-px bg-[#777c84]" /></span>
        <span className="w-[14px]" />
      </div>
    </div>
  );
}

function ViewButton({ label, d, active = false }: { label: string; d: string; active?: boolean }) {
  return (
    <button
      aria-label={label}
      className={clsx('flex h-[18px] w-[19px] items-center justify-center', active && 'rounded-[2px] border border-[#c08a28] bg-[#ffe27a]')}
    >
      <svg width="14" height="12" viewBox="0 0 14 12" fill="#f4f4f4" stroke="#555a62" shapeRendering="crispEdges"><path d={d} /></svg>
    </button>
  );
}

function StatusBar() {
  return (
    <footer className="flex h-5 shrink-0 items-center bg-linear-to-b from-[#e4e7eb] to-[#bdc1c7] text-[#2e2e2e]">
      <span className="w-[50px] pl-[6px]">Pronto</span>
      <span className="h-full w-px bg-[#858b94]" />
      <div className="flex-1" />
      <span className="mr-1 h-full w-px bg-[#858b94]" />
      <ViewButton label="Normal" active d="M.5.500h13v10H.5zM.5 4h13M.5 7.500h13M5 .5v10M9 .5v10" />
      <ViewButton label="Layout da página" d="M.5.500h13v11H.5zM3.500 2.500h7v7h-7zM5 4.500h4M5 6.500h4" />
      <ViewButton label="Visualização de quebra de página" d="M.5.500h13v11H.5zM4.500.500v6M8.500.500v6H.5" />
      <button className="ml-2 w-8 text-[11px]">100%</button>
      <button aria-label="Reduzir" className="ml-[6px] flex h-4 w-4 items-center justify-center rounded-full border border-[#6d727a] bg-white"><span className="h-[2px] w-2 bg-[#444]" /></button>
      <input
        type="range"
        aria-label="Zoom"
        defaultValue="50"
        className="h-4 w-[100px] appearance-none bg-[linear-gradient(#8a9099,#8a9099)] bg-[length:100%_1px] bg-center bg-no-repeat [&::-webkit-slider-thumb]:h-3 [&::-webkit-slider-thumb]:w-[9px] [&::-webkit-slider-thumb]:appearance-none [&::-webkit-slider-thumb]:rounded-b-[4px] [&::-webkit-slider-thumb]:border [&::-webkit-slider-thumb]:border-[#5a5f67] [&::-webkit-slider-thumb]:bg-[#f2f4f6]"
      />
      <button aria-label="Ampliar" className="mr-[2px] flex h-4 w-4 items-center justify-center rounded-full border border-[#6d727a] bg-white">
        <svg width="8" height="8" viewBox="0 0 8 8" stroke="#444" strokeWidth="2"><path d="M0 4h8M4 0v8" /></svg>
      </button>
    </footer>
  );
}

export default function App() {
  return (
    <div className="flex h-screen flex-col overflow-hidden font-['Open_Sans','Noto_Sans',sans-serif] text-[11px] leading-4">
      <div className="shrink-0 bg-[radial-gradient(ellipse_420px_30px_at_60px_12px,#ffffff88,transparent),linear-gradient(#666_0%,#8c8c8c_30%,#c4c4c4_60%,#f2f2f2_95%)]">
        <TitleBar />
        <RibbonTabs />
      </div>
      <Ribbon />
      <FormulaBar />
      <div className="flex min-h-0 flex-1">
        <main className="min-w-0 flex-1 overflow-hidden bg-white text-[#262626]">
          <Sheet />
        </main>
        <VerticalScroll />
      </div>
      <SheetTabs />
      <StatusBar />
    </div>
  );
}
